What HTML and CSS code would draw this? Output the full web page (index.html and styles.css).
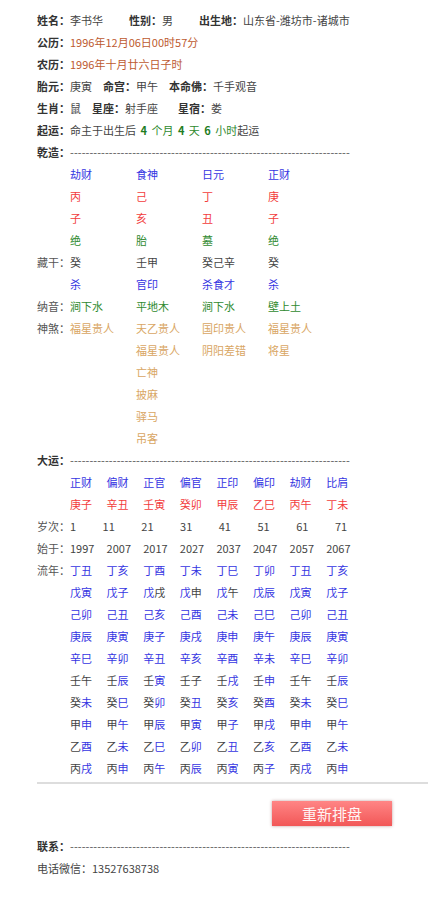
FILE: index.html
```html
<!DOCTYPE html>
<html lang="zh-CN">
<head>
<meta charset="utf-8">
<title>八字排盘</title>
<link rel="stylesheet" href="styles.css">
</head>
<body>
<div class="page">
  <div class="row"><span class="item"><b class="lbl">姓名：</b>李书华</span><span class="item"><b class="lbl">性别：</b>男</span><span><b class="lbl">出生地：</b>山东省-潍坊市-诸城市</span></div>
  <div class="row"><b class="lbl">公历：</b><span class="orange">1996年12月06日00时57分</span></div>
  <div class="row"><b class="lbl">农历：</b><span class="orange">1996年十月廿六日子时</span></div>
  <div class="row"><span class="sp"><b class="lbl">胎元：</b>庚寅</span><span class="sp"><b class="lbl">命宫：</b>甲午</span><span><b class="lbl">本命佛：</b>千手观音</span></div>
  <div class="row"><span class="sp"><b class="lbl">生肖：</b>鼠</span><span class="sp-w"><b class="lbl">星座：</b>射手座</span><span><b class="lbl">星宿：</b>娄</span></div>
  <div class="row qiyun"><b class="lbl">起运：</b>命主于出生后 <span class="green"><b>4</b> 个月 <b>4</b> 天 <b>6</b> 小时</span>起运</div>
  <div class="row"><b class="lbl">乾造：</b><span class="dash">------------------------------------------------------------------------</span></div>

  <div class="pillars">
    <div></div><div class="blue">劫财</div><div class="blue">食神</div><div class="blue">日元</div><div class="blue">正财</div>
    <div></div><div class="red">丙</div><div class="red">己</div><div class="red">丁</div><div class="red">庚</div>
    <div></div><div class="red">子</div><div class="red">亥</div><div class="red">丑</div><div class="red">子</div>
    <div></div><div class="green">绝</div><div class="green">胎</div><div class="green">墓</div><div class="green">绝</div>
    <div class="lab">藏干：</div><div>癸</div><div>壬甲</div><div>癸己辛</div><div>癸</div>
    <div></div><div class="blue">杀</div><div class="blue">官印</div><div class="blue">杀食才</div><div class="blue">杀</div>
    <div class="lab">纳音：</div><div class="green">涧下水</div><div class="green">平地木</div><div class="green">涧下水</div><div class="green">壁上土</div>
    <div class="lab">神煞：</div>
    <div class="tan"><div>福星贵人</div></div>
    <div class="tan"><div>天乙贵人</div><div>福星贵人</div><div>亡神</div><div>披麻</div><div>驿马</div><div>吊客</div></div>
    <div class="tan"><div>国印贵人</div><div>阴阳差错</div></div>
    <div class="tan"><div>福星贵人</div><div>将星</div></div>
  </div>

  <div class="row"><b class="lbl">大运：</b><span class="dash">------------------------------------------------------------------------</span></div>

  <div class="dayun">
    <div></div><div class="blue">正财</div><div class="blue">偏财</div><div class="blue">正官</div><div class="blue">偏官</div><div class="blue">正印</div><div class="blue">偏印</div><div class="blue">劫财</div><div class="blue">比肩</div>
    <div></div><div class="red">庚子</div><div class="red">辛丑</div><div class="red">壬寅</div><div class="red">癸卯</div><div class="red">甲辰</div><div class="red">乙巳</div><div class="red">丙午</div><div class="red">丁未</div>
    <div class="lab">岁次：</div><div class="ages"><span>1</span><span>11</span><span>21</span><span>31</span><span>41</span><span>51</span><span>61</span><span>71</span></div>
    <div class="lab">始于：</div><div>1997</div><div>2007</div><div>2017</div><div>2027</div><div>2037</div><div>2047</div><div>2057</div><div>2067</div>
    <div class="lab">流年：</div>
    <div class="blue">丁丑</div><div class="blue">丁亥</div><div class="blue">丁酉</div><div class="blue">丁未</div><div class="blue">丁巳</div><div class="blue">丁卯</div><div class="blue">丁丑</div><div class="blue">丁亥</div>
    <div></div>
    <div class="blue">戊寅</div><div class="blue">戊子</div><div><span class="blue">戊</span>戌</div><div><span class="blue">戊</span>申</div><div><span class="blue">戊</span>午</div><div class="blue">戊辰</div><div class="blue">戊寅</div><div class="blue">戊子</div>
    <div></div>
    <div class="blue">己卯</div><div class="blue">己丑</div><div class="blue">己亥</div><div class="blue">己酉</div><div class="blue">己未</div><div class="blue">己巳</div><div class="blue">己卯</div><div class="blue">己丑</div>
    <div></div>
    <div class="blue">庚辰</div><div class="blue">庚寅</div><div class="blue">庚子</div><div class="blue">庚戌</div><div class="blue">庚申</div><div class="blue">庚午</div><div class="blue">庚辰</div><div class="blue">庚寅</div>
    <div></div>
    <div class="blue">辛巳</div><div class="blue">辛卯</div><div class="blue">辛丑</div><div class="blue">辛亥</div><div class="blue">辛酉</div><div class="blue">辛未</div><div class="blue">辛巳</div><div class="blue">辛卯</div>
    <div></div>
    <div>壬午</div><div>壬<span class="blue">辰</span></div><div>壬<span class="blue">寅</span></div><div>壬子</div><div>壬<span class="blue">戌</span></div><div>壬<span class="blue">申</span></div><div>壬午</div><div>壬<span class="blue">辰</span></div>
    <div></div>
    <div>癸<span class="blue">未</span></div><div>癸<span class="blue">巳</span></div><div>癸<span class="blue">卯</span></div><div>癸<span class="blue">丑</span></div><div>癸<span class="blue">亥</span></div><div>癸<span class="blue">酉</span></div><div>癸<span class="blue">未</span></div><div>癸<span class="blue">巳</span></div>
    <div></div>
    <div>甲<span class="blue">申</span></div><div>甲<span class="blue">午</span></div><div>甲<span class="blue">辰</span></div><div>甲<span class="blue">寅</span></div><div>甲<span class="blue">子</span></div><div>甲<span class="blue">戌</span></div><div>甲<span class="blue">申</span></div><div>甲<span class="blue">午</span></div>
    <div></div>
    <div>乙<span class="blue">酉</span></div><div>乙<span class="blue">未</span></div><div>乙<span class="blue">巳</span></div><div>乙<span class="blue">卯</span></div><div>乙<span class="blue">丑</span></div><div>乙<span class="blue">亥</span></div><div>乙<span class="blue">酉</span></div><div>乙<span class="blue">未</span></div>
    <div></div>
    <div>丙<span class="blue">戌</span></div><div>丙<span class="blue">申</span></div><div>丙<span class="blue">午</span></div><div>丙<span class="blue">辰</span></div><div>丙<span class="blue">寅</span></div><div>丙<span class="blue">子</span></div><div>丙<span class="blue">戌</span></div><div>丙<span class="blue">申</span></div>
  </div>

  <div class="actions"><div class="btn">重新排盘</div></div>

  <div class="row"><b class="lbl">联系：</b><span class="dash">------------------------------------------------------------------------</span></div>
  <div class="row">电话微信：13527638738</div>
</div>
</body>
</html>
```

FILE: styles.css
```css
html, body {
  margin: 0;
  padding: 0;
  background: #ffffff;
}

body {
  font-family: "Noto Sans CJK SC", "Noto Sans", sans-serif;
  font-size: 11px;
  line-height: 22px;
  color: #444444;
}

.page {
  padding: 9px 0 40px 37px;
}

.row {
  height: 22px;
  white-space: nowrap;
}

.qiyun {
  word-spacing: 2px;
}

.lbl {
  font-weight: bold;
  color: #333333;
}

.item {
  margin-right: 26px;
}

.sp {
  margin-right: 11px;
}

.sp-w {
  margin-right: 20px;
}

.orange { color: #bd5a30; }
.blue { color: #3535e2; }
.red { color: #f23c3c; }
.green { color: #2f8a2f; }
.tan { color: #d9a663; }

.green b {
  font-weight: bold;
  color: #1f7d1f;
}

.dash {
  color: #555555;
  letter-spacing: 0.07px;
}

.lab {
  color: #555555;
}

.pillars {
  display: grid;
  grid-template-columns: 33px repeat(4, 66px);
  grid-auto-rows: minmax(22px, auto);
  white-space: nowrap;
}

.dayun {
  display: grid;
  grid-template-columns: 33px repeat(8, 36.6px);
  grid-auto-rows: 22px;
  white-space: nowrap;
  padding-bottom: 3px;
  border-bottom: 2px solid #dddddd;
}

.ages {
  grid-column: 2 / -1;
  display: flex;
  gap: 26.5px;
}

.actions {
  padding: 17px 0 9px 235px;
}

.btn {
  width: 120px;
  height: 25px;
  line-height: 25px;
  text-align: center;
  font-size: 15px;
  color: #fff4f4;
  background: linear-gradient(#ff8585, #f25757);
  box-shadow: 0 0 3px rgba(120, 40, 40, 0.45);
}
```
